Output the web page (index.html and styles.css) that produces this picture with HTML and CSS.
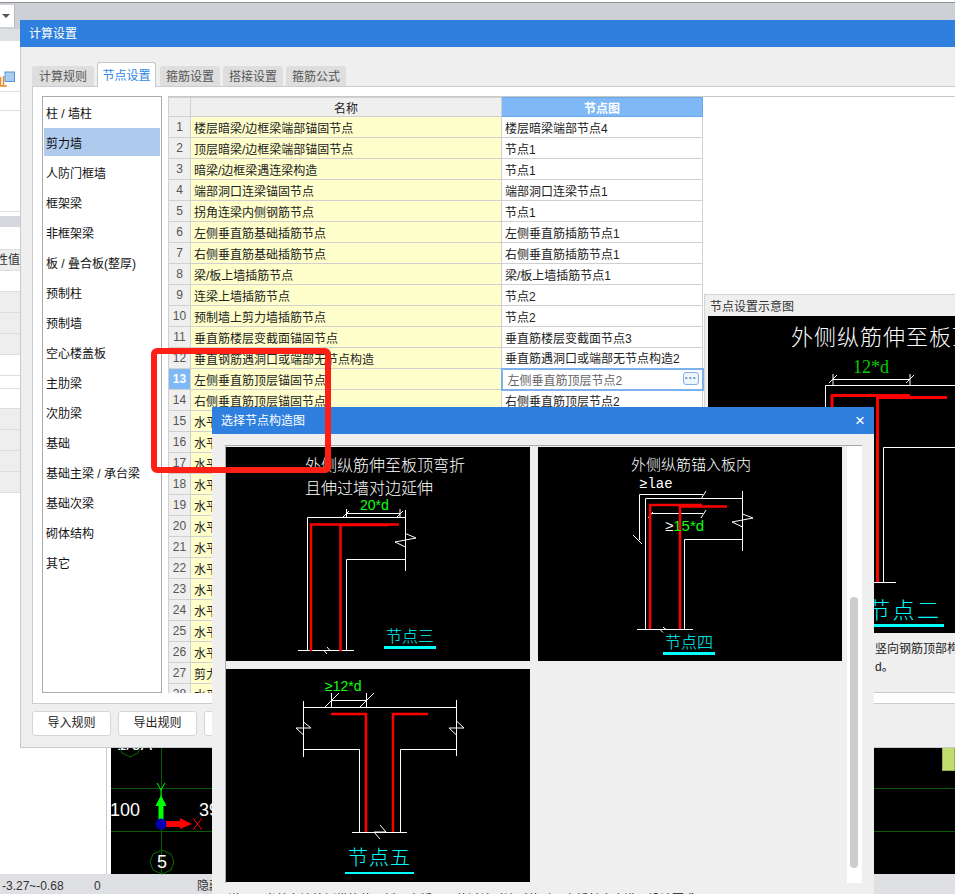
FILE: index.html
```html
<!DOCTYPE html>
<html lang="zh">
<head>
<meta charset="utf-8">
<title>计算设置</title>
<link rel="stylesheet" href="styles.css">
</head>
<body>
<div class="app">
  <div class="topbar"><span class="combo"><i class="caret"></i></span></div>
  <div class="left-bg">
    <div class="lb band"></div>
    <div class="lb h51">
      <svg class="tool-ico" width="15" height="16" viewBox="0 0 15 16"><path d="M.5 15.500V6M3.500 15.500V5" fill="none" stroke="#e58a2b" stroke-width="1.500"/><path d="M.5 15H7" fill="none" stroke="#e58a2b" stroke-width="1.500"/><rect x="5" y="1" width="9.500" height="9.500" fill="#a9cdf2" stroke="#5b95d6"/></svg>
    </div>
    <div class="lb h19"></div>
    <div class="lb h101"></div>
    <div class="lb h5"></div>
    <div class="lb band2"></div>
    <div class="lb h23"></div>
    <div class="lb head">性值</div>
    <div class="lb h21"></div>
    <div class="lb h21 g"></div><div class="lb h21 g"></div><div class="lb h21 g"></div>
    <div class="lb h21"></div><div class="lb h13"></div><div class="lb h20"></div>
    <div class="lb h21 g"></div><div class="lb h21 g"></div><div class="lb h21 g"></div><div class="lb h21 g"></div>
  </div>
  <div class="status"><span class="s1">-3.27~-0.68</span><span class="s2">0</span><span class="s3">隐藏</span></div>

  <div class="cad">
    <span class="c18">1/0A</span>
    <svg class="hex-top" width="22" height="26" viewBox="0 0 22 26"><path d="M11 25l8-4 3-8-3-8-8-4-8 4-3 8 3 8z" fill="none" stroke="#0a6a0a"/></svg>
    <span class="c100">100</span><span class="c39">39</span>
    <span class="gl g1"></span><span class="gl g2"></span><span class="vl"></span>
    <svg class="axis" width="70" height="70" viewBox="0 0 70 70"><path d="M20 21l-5.500 11h11z" fill="#0f0"/><rect x="17.500" y="31" width="5" height="19" fill="#0f0"/><rect x="24" y="47" width="16" height="6" fill="#f00"/><path d="M39 44l12 6-12 5z" fill="#f00"/><circle cx="20" cy="50" r="5.500" fill="#0000b0"/><path d="M52 44l9 12M61 44l-9 12" stroke="#f00" fill="none"/><path d="M16 9l4 7 4-7M20 16v6" stroke="#0f0" fill="none"/></svg>
    <svg class="hex5" width="26" height="26" viewBox="0 0 26 26"><path d="M13 1l9 4 3 8-3 8-9 4-9-4-3-8 3-8z" fill="none" stroke="#0a6a0a"/></svg><span class="five">5</span>
    <span class="green-box"></span>
  </div>

  <section class="dlg main">
    <header class="bar">计算设置</header>
    <div class="tabs">
      <span class="tab">计算规则</span><span class="tab on">节点设置</span><span class="tab">箍筋设置</span><span class="tab">搭接设置</span><span class="tab">箍筋公式</span>
    </div>
    <div class="pane">
      <ul class="cats">
        <li>柱 / 墙柱</li><li class="on">剪力墙</li><li>人防门框墙</li><li>框架梁</li><li>非框架梁</li><li>板 / 叠合板(整厚)</li><li>预制柱</li><li>预制墙</li><li>空心楼盖板</li><li>主肋梁</li><li>次肋梁</li><li>基础</li><li>基础主梁 / 承台梁</li><li>基础次梁</li><li>砌体结构</li><li>其它</li>
      </ul>
      <div class="grid-wrap">
      <table class="grid">
        <colgroup><col class="c-n"><col class="c-a"><col class="c-b"></colgroup>
        <thead><tr><th></th><th>名称</th><th class="hl">节点图</th></tr></thead>
        <tbody>
          <tr><th>1</th><td>楼层暗梁/边框梁端部锚固节点</td><td>楼层暗梁端部节点4</td></tr>
          <tr><th>2</th><td>顶层暗梁/边框梁端部锚固节点</td><td>节点1</td></tr>
          <tr><th>3</th><td>暗梁/边框梁遇连梁构造</td><td>节点1</td></tr>
          <tr><th>4</th><td>端部洞口连梁锚固节点</td><td>端部洞口连梁节点1</td></tr>
          <tr><th>5</th><td>拐角连梁内侧钢筋节点</td><td>节点1</td></tr>
          <tr><th>6</th><td>左侧垂直筋基础插筋节点</td><td>左侧垂直筋插筋节点1</td></tr>
          <tr><th>7</th><td>右侧垂直筋基础插筋节点</td><td>右侧垂直筋插筋节点1</td></tr>
          <tr><th>8</th><td>梁/板上墙插筋节点</td><td>梁/板上墙插筋节点1</td></tr>
          <tr><th>9</th><td>连梁上墙插筋节点</td><td>节点2</td></tr>
          <tr><th>10</th><td>预制墙上剪力墙插筋节点</td><td>节点2</td></tr>
          <tr><th>11</th><td>垂直筋楼层变截面锚固节点</td><td>垂直筋楼层变截面节点3</td></tr>
          <tr><th>12</th><td>垂直钢筋遇洞口或端部无节点构造</td><td>垂直筋遇洞口或端部无节点构造2</td></tr>
          <tr class="cur"><th>13</th><td>左侧垂直筋顶层锚固节点</td><td class="edit"><span>左侧垂直筋顶层节点2</span><b class="more">···</b></td></tr>
          <tr><th>14</th><td>右侧垂直筋顶层锚固节点</td><td>右侧垂直筋顶层节点2</td></tr>
          <tr><th>15</th><td>水平筋</td><td></td></tr>
          <tr><th>16</th><td>水平筋</td><td></td></tr>
          <tr><th>17</th><td>水平筋</td><td></td></tr>
          <tr><th>18</th><td>水平筋</td><td></td></tr>
          <tr><th>19</th><td>水平筋</td><td></td></tr>
          <tr><th>20</th><td>水平筋</td><td></td></tr>
          <tr><th>21</th><td>水平筋</td><td></td></tr>
          <tr><th>22</th><td>水平筋</td><td></td></tr>
          <tr><th>23</th><td>水平筋</td><td></td></tr>
          <tr><th>24</th><td>水平筋</td><td></td></tr>
          <tr><th>25</th><td>水平筋</td><td></td></tr>
          <tr><th>26</th><td>水平筋</td><td></td></tr>
          <tr><th>27</th><td>剪力墙</td><td></td></tr>
          <tr><th>28</th><td>水平筋</td><td></td></tr>
        </tbody>
      </table>
      </div>
    </div>
    <div class="btns"><button>导入规则</button><button>导出规则</button><button>恢复</button></div>

    <div class="preview">
      <div class="pv-title">节点设置示意图</div>
      <div class="pv-black">
        <div class="pv-head">外侧纵筋伸至板顶弯折</div>
        <svg class="pv-svg" width="247" height="317" viewBox="0 0 247 317">
          <g fill="none" stroke="#fff"><path d="M117.500 317V69.500H247M175.500 266V131.500H247M100 266.500H188M125 63.500H202M125 58v11M202 58v11M121 67l8-8M198 67l8-8"/></g>
          <g fill="none" stroke="#f00" stroke-width="3"><path d="M124 266V79.500H202"/><path d="M169.500 266V81.500H239"/></g>
        </svg>
        <div class="pv-12">12*d</div>
        <div class="pv-node">节点二</div>
      </div>
      <p class="pv-note">竖向钢筋顶部构<br>d。</p>
    </div>
  </section>

  <section class="dlg pick">
    <header class="bar">选择节点构造图<span class="x">×</span></header>
    <div class="pick-body">
      <div class="gallery">
        <figure class="fig f3">
          <svg width="304" height="214" viewBox="0 0 304 214">
            <g fill="none" stroke="#fff"><path d="M81.500 204V70.500H179.500M179.500 63V124M120.500 204V112.500H179.500M72 203.500H128M120 66.500H174M120.500 62v9M174 62v9M117 70l6-6M171 70l6-6"/><path d="M179.500 86.500L190 91 169 95 179.500 100M101 200l3 3.500-6 0 3 3.500"/></g>
            <g fill="none" stroke="#f00"><path d="M85 204V77.500H173" stroke-width="2.500"/><path d="M114.500 204V78H162" stroke-width="2.500"/></g>
          </svg>
          <div class="t1">外侧纵筋伸至板顶弯折<br>且伸过墙对边延伸</div>
          <span class="dim d20">20*d</span><span class="node n3">节点三</span>
        </figure>
        <figure class="fig f4">
          <svg width="304" height="214" viewBox="0 0 304 214">
            <g fill="none" stroke="#fff"><path d="M107.500 182V51.500H204.500M204.500 44V104M146.500 182V92.500H204.500M99 182.500H155M101.500 93V47.500H165M112 66.500H165M95 88l9 9M163 52l5-8M163 71l5-8M110 71l5-6"/><path d="M204.500 67L215 71 194 75 204.500 80M125 180l3 2.500-6 0 3 3"/></g>
            <g fill="none" stroke="#f00" stroke-width="2.500"><path d="M112 182V58H164"/><path d="M142 182V59.500H189"/></g>
          </svg>
          <div class="t2">外侧纵筋锚入板内</div>
          <div class="lae">≥lae</div>
          <span class="dim d15"><em>≥</em>15*d</span><span class="node n4">节点四</span>
        </figure>
        <figure class="fig f5">
          <svg width="304" height="213" viewBox="0 0 304 213">
            <g fill="none" stroke="#fff"><path d="M77.500 32V88M230.500 31V87M77 38.500H231M77 80.500H133.500V163M231 80.500H174.500V163M126 163.500H181M105 31.500H141M105.500 24v14M140.500 24v14M99 38l14-14M134 38l14-14"/><path d="M77.500 53L85 59H70L77.500 66M230.500 52L238 59H223L230.500 66M154 156L160 163H148L154 170"/></g>
            <g fill="none" stroke="#f00" stroke-width="2.500"><path d="M105 45H140V163"/><path d="M167 163V45H202"/></g>
          </svg>
          <span class="dim d12">≥12*d</span><span class="node n5">节点五</span>
        </figure>
      </div>
      <div class="track"><span class="thumb"></span></div>
    </div>
    <div class="pick-foot">说明：当剪力墙外侧纵筋伸至板顶弯折，且伸过墙对边延伸时，弯折长度应满足设计要求</div>
  </section>

  <div class="redbox"></div>
</div>
</body>
</html>
```
FILE: styles.css
```css
* { box-sizing: border-box; }
html, body { margin: 0; padding: 0; }
body { font-family: "Liberation Sans", "Noto Sans CJK SC", sans-serif; font-size: 12px; color: #222; }
ul { margin: 0; padding: 0; list-style: none; }
p, figure { margin: 0; }
.app { position: relative; width: 955px; height: 894px; overflow: hidden; background: #fff; padding-top: 2px; }
.topbar { height: 27px; background: #cdd0d5; border-top: 1px solid #8e9094; padding-top: 2px; }
.combo { display: block; width: 14px; height: 22px; background: #fff; position: relative; box-shadow: 1px 0 0 #bbb; }
.caret { position: absolute; left: 2px; top: 9px; border: 4px solid transparent; border-top-color: #555; }

.left-bg { width: 107px; height: 845px; border-right: 1px solid #ccc; background: #fff; overflow: hidden; }
.lb { border-bottom: 1px solid #ddd; position: relative; }
.band { height: 12px; background: #dfe0e3; border: 0; }
.h51 { height: 51px; }
.h19 { height: 19px; }
.h101 { height: 101px; }
.h5 { height: 4px; border: 0; }
.band2 { height: 11px; background: #d6d7dc; border: 0; }
.h23 { height: 23px; }
.head { height: 21px; background: #eee; line-height: 20px; color: #333; margin-left: -4px; }
.h21 { height: 21px; }
.h13 { height: 13px; }
.h20 { height: 20px; }
.g { background: #eee; }
.tool-ico { position: absolute; left: 0; top: 30px; }

.status { position: absolute; left: 0; right: 0; bottom: 0; height: 20px; background: #dfe0e3; color: #333; font-size: 12px; line-height: 24px; display: flex; }
.s1 { margin-left: 2px; width: 92px; }
.s2 { width: 103px; }

.cad { position: absolute; left: 111px; top: 705px; width: 844px; height: 169px; background: #000; color: #fff; }
.cad span { position: absolute; }
.gl { left: 0; right: 0; height: 1px; background: #0a5a0a; }
.g1 { top: 83px; }
.g2 { top: 126px; }
.vl { left: 50px; top: 40px; bottom: 0; width: 1px; background: #0a5a0a; }
.c18 { left: 6px; top: 30px; font-size: 17px; line-height: 20px; }
.hex-top { position: absolute; left: 8px; top: 27px; }
.c100 { left: -1px; top: 95px; font-size: 18px; line-height: 20px; }
.c39 { left: 88px; top: 95px; font-size: 18px; line-height: 20px; }
.axis { position: absolute; left: 30px; top: 69px; }
.hex5 { position: absolute; left: 38px; top: 144px; }
.five { left: 46px; top: 147px; font-size: 18px; line-height: 20px; }
.green-box { left: 831px; top: 42px; width: 13px; height: 24px; background: #c3dc6e; border: 1px solid #9ab24e; }

.dlg { position: absolute; background: #efefef; }
.bar { height: 27px; background: #2f7fde; color: #fff; font-size: 12px; line-height: 28px; padding-left: 9px; position: relative; }
.main { left: 20px; top: 20px; width: 935px; height: 728px; border-left: 1px solid #c5cad3; border-bottom: 1px solid #c5cad3; }
.main .bar { margin-left: -1px; }
.tabs { display: flex; height: 39px; padding: 0 0 0 11px; gap: 3px; align-items: flex-end; }
.tab { width: 60px; height: 20px; background: #dedede; border-radius: 3px 3px 0 0; text-align: center; line-height: 22px; color: #555; }
.tab:first-child { width: 62px; }
.tab.on { width: 59px; height: 25px; background: #fff; color: #2f86e8; line-height: 27px; border: 1px solid #c8c8c8; border-bottom: 0; margin: 0 1px -1px 0; position: relative; z-index: 1; }
.pane { position: relative; display: flex; margin-left: 11px; height: 618px; background: #fff; border: 1px solid #c9ccd2; border-right: 0; padding: 9px 0 0 9px; gap: 6px; }
.cats { width: 120px; height: 597px; border: 1px solid #aaa; padding: 1px; flex: none; overflow: hidden; }
.cats li { height: 28px; margin-bottom: 2px; padding: 3px 0 0 2px; line-height: 26px; color: #111; }
.cats li.on { background: #aecaec; }
.grid-wrap { flex: 1; height: 597px; overflow: hidden; border-top: 1px solid #c8c8c8; }
.grid { width: 534px; table-layout: fixed; border-collapse: collapse; }
.c-n { width: 22px; }
.c-a { width: 311px; }
.c-b { width: 201px; }
.grid th, .grid td { border: 1px solid #d0d0d0; height: 21px; padding: 0; font-weight: 400; overflow: hidden; white-space: nowrap; color: #222; }
.grid thead th { height: 19px; background: #efefef; }
.grid thead th.hl { background: #7fb8f7; color: #fff; font-weight: 700; border: 1px solid #6aa8ee; }
.grid tbody th { background: #efefef; color: #555; font-size: 12px; }
.grid tbody td { padding-left: 3px; background: #fff; }
.grid tbody td:nth-child(2) { background: #ffffcc; }
.grid .cur th { background: #7fb8f7; color: #fff; font-weight: 700; }
.grid td.edit { border: 2px solid #7db1ee; color: #666; position: relative; }
.edit span { color: #666; padding-left: 2px; }
.more { position: absolute; right: 3px; top: 2px; width: 16px; height: 13px; border: 1px solid #7db1ee; border-radius: 3px; font: 700 12px/10px "Liberation Sans", sans-serif; color: #5a8fcc; text-align: center; background: #eef5fd; }
.btns { display: flex; gap: 7px; padding: 7px 0 0 11px; }
.btns button { width: 79px; height: 25px; background: #fff; border: 1px solid #d6d6d6; border-radius: 3px; font: 12px/20px "Liberation Sans", "Noto Sans CJK SC", sans-serif; color: #222; padding: 0 0 1px; }

.preview { position: absolute; left: 683px; top: 274px; width: 252px; height: 399px; background: #efefef; border-top: 1px solid #d4d4d4; border-left: 1px solid #d4d4d4; border-bottom: 1px solid #ccc; }
.pv-title { height: 21px; line-height: 24px; padding-left: 5px; color: #333; }
.pv-black { position: relative; margin-left: 3px; height: 317px; background: #000; overflow: hidden; }
.pv-head { position: absolute; left: 83px; top: 7px; font-size: 22px; font-weight: 300; line-height: 30px; color: #fff; white-space: nowrap; letter-spacing: 1px; }
.pv-svg { position: absolute; left: 0; top: 0; }
.pv-12 { position: absolute; left: 145px; top: 42px; color: #0c0; font: 18px/18px "Liberation Serif", serif; }
.pv-node { position: absolute; left: 158px; top: 282px; width: 78px; color: #0ff; font-size: 22px; font-weight: 300; line-height: 26px; letter-spacing: 2.500px; padding-left: 2px; border-bottom: 3px solid #0ff; white-space: nowrap; }
.pv-note { padding: 7px 0 0 170px; line-height: 18px; color: #222; white-space: nowrap; }

.pick { left: 212px; top: 407px; width: 662px; height: 487px; background: #efefef; overflow: hidden; }
.x { position: absolute; right: 9px; top: 0; font-size: 17px; }
.pick-body { position: relative; margin: 11px 0 0 13px; width: 637px; height: 438px; border-top: 1px solid #aaa; border-left: 1px solid #aaa; display: flex; }
.gallery { width: 620px; height: 437px; padding-top: 1px; display: flex; flex-wrap: wrap; gap: 8px; align-content: flex-start; }
.fig { position: relative; width: 304px; height: 214px; background: #000; overflow: hidden; }
.fig svg { position: absolute; left: 0; top: 0; }
.f5 { height: 213px; }
.t1 { position: absolute; left: 79px; top: 7px; width: 200px; color: #fff; font-size: 16px; font-weight: 300; line-height: 23px; }
.t2 { position: absolute; left: 93px; top: 8px; color: #fff; font-size: 15px; font-weight: 300; line-height: 20px; }
.lae { position: absolute; left: 101px; top: 29px; color: #fff; font: 14px/16px "Liberation Mono", monospace; }
.dim { position: absolute; color: #1f1; font: 15px/16px "Liberation Sans", sans-serif; white-space: nowrap; }
.dim em { font-style: normal; color: #fff; }
.d20 { left: 134px; top: 50px; font-size: 14px; }
.d15 { left: 127px; top: 71px; }
.d12 { left: 99px; top: 9px; font-size: 14px; }
.node { position: absolute; color: #0ff; font-size: 16px; font-weight: 300; line-height: 19px; border-bottom: 3px solid #0ff; white-space: nowrap; text-align: center; }
.n3 { left: 158px; top: 180px; width: 52px; }
.n4 { left: 125px; top: 186px; width: 52px; }
.n5 { left: 119px; top: 175px; width: 69px; font-size: 20px; line-height: 28px; letter-spacing: 1px; border-bottom-width: 2px; }
.track { width: 15px; height: 437px; margin-left: 1px; background: #fff; position: relative; }
.thumb { position: absolute; left: 3px; top: 151px; width: 8px; height: 271px; background: #ccc; border-radius: 4px; }
.pick-foot { margin: 7px 0 0 16px; color: #111; white-space: nowrap; }

.redbox { position: absolute; left: 151px; top: 348px; width: 180px; height: 125px; border: 6px solid #ff2015; border-radius: 6px; }
```
